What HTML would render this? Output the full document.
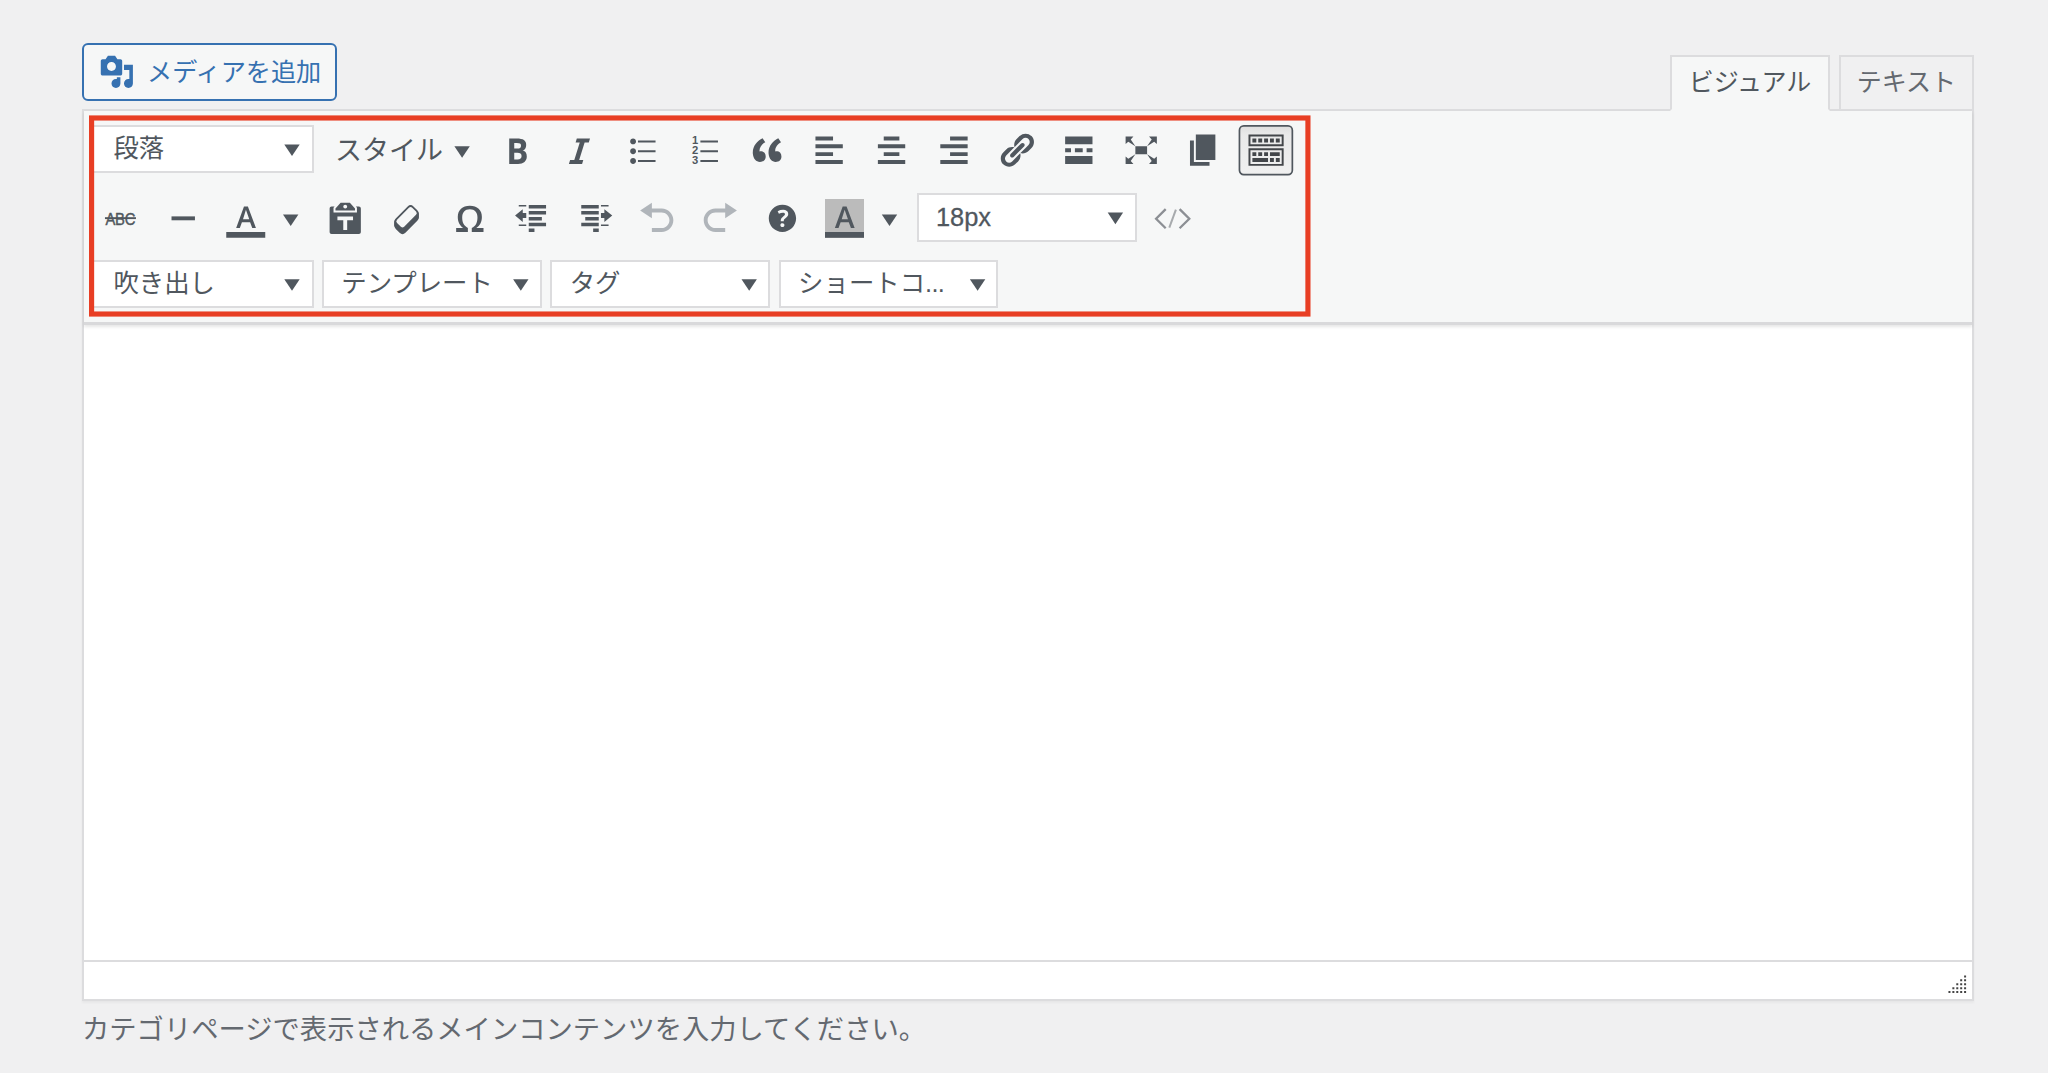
<!DOCTYPE html>
<html lang="ja">
<head>
<meta charset="utf-8">
<title>エディター</title>
<style>
*{box-sizing:border-box;margin:0;padding:0}
button{font:inherit;color:inherit;text-align:left;cursor:pointer;-webkit-appearance:none;appearance:none}
html,body{width:2048px;height:1073px;overflow:hidden}
body{background:#f0f0f1;font-family:"Liberation Sans","Noto Sans CJK JP",sans-serif;color:#3c434a;position:relative}
.abs{position:absolute}
/* add media button */
#addmedia{left:82px;top:43px;width:255.200px;height:58px;border:2px solid #3671b1;border-radius:6px;background:#f6f7f7;color:#3671b1;font-size:25.150px;line-height:54px;white-space:nowrap}
#addmedia svg{position:absolute;left:15px;top:9.200px;width:35.700px;height:35.700px;fill:#3671b1}
#addmedia span{position:absolute;left:63px;top:-.3px;font-weight:400}
/* tabs */
.tab{top:55px;height:56px;padding-bottom:1.400px;border:2px solid #dcdcde;font-size:25px;line-height:50px;text-align:center;color:#50575e;white-space:nowrap}
#tab-visual{left:1670px;width:160px;background:#f6f7f7;border-bottom-color:#f6f7f7;z-index:3}
#tab-text{left:1839px;width:135px;background:#f0f0f1;color:#646970;z-index:1}
/* editor container */
#wrap{left:82px;top:109px;width:1892px;height:892px;border:2px solid #dcdcde;background:#fff;z-index:2;box-shadow:0 2px 2px rgba(0,0,0,.04)}
#toolbar{left:84px;top:111px;width:1888px;height:214px;background:#f6f7f7;z-index:2;border-bottom:3px solid #d9d9db;box-shadow:0 2px 3px rgba(0,0,0,.1)}
#red{left:80px;top:105px;width:1240px;height:220px;z-index:6;overflow:visible}
#statusline{left:84px;top:960px;width:1888px;height:2px;background:#dcdcde;z-index:3}
#desc{left:82px;top:1009.400px;font-size:27.300px;line-height:42px;color:#646970;white-space:nowrap;z-index:3}
/* list boxes */
.lb{background:#fff;border:2px solid #dcdcde;height:49px;font-size:25.400px;line-height:45px;color:#50575e;white-space:nowrap;z-index:4;overflow:hidden}
.lb span{position:absolute;left:16px;top:-1px}
.lb b{font-weight:400;position:relative;top:1px;-webkit-text-stroke:.3px #50575e}
.lb i{font-style:normal;letter-spacing:-.7px}
#bgbox{left:825px;top:199px;width:39px;height:38.800px;background:#bbb;z-index:4}
#sinkbtn{left:1237px;top:123px;z-index:4}
#icons{left:0;top:0;z-index:5;pointer-events:none}
.txt{z-index:5;color:#50575e;white-space:nowrap}
</style>
</head>
<body>
<button type="button" class="abs" id="addmedia"><svg viewBox="0 0 20 20"><path d="M13 11V4c0-.55-.45-1-1-1h-1.67L9 1H5L3.67 3H2c-.55 0-1 .45-1 1v7c0 .55.45 1 1 1h10c.55 0 1-.45 1-1zM7 4.5c1.38 0 2.5 1.12 2.5 2.5S8.38 9.5 7 9.5 4.500 8.380 4.500 7 5.620 4.500 7 4.500zM14 6h5v10.500c0 1.380-1.120 2.500-2.500 2.500S14 17.880 14 16.500s1.120-2.500 2.500-2.500c.17 0 .34.02.5.05V9h-3V6zm-4 8.050V13h2v3.500c0 1.380-1.120 2.500-2.500 2.500S7 17.880 7 16.500 8.120 14 9.500 14c.17 0 .34.02.5.05z"/></svg><span>メディアを追加</span></button>

<button type="button" class="abs tab" id="tab-visual">ビジュアル</button>
<button type="button" class="abs tab" id="tab-text">テキスト</button>

<div class="abs" id="wrap"></div>
<div class="abs" id="toolbar"></div>
<svg class="abs" id="red" viewBox="0 0 1240 220"><rect x="11.580" y="12.980" width="1216.350" height="196.050" fill="none" stroke="#e83e24" stroke-width="5.150"/></svg>
<div class="abs" id="statusline"></div>

<!-- ROW1 -->
<div class="abs lb" style="left:92px;top:125.3px;width:222px;height:48px"><span style="left:19.4px">段落</span></div>
<div class="abs txt" style="left:335px;top:127px;font-size:27px;line-height:48px">スタイル</div>
<svg class="abs" id="sinkbtn" width="60" height="56"><defs><linearGradient id="sg" x1="0" y1="0" x2="0" y2="1"><stop offset="0" stop-color="#dedede"/><stop offset=".18" stop-color="#e9e9e9"/><stop offset="1" stop-color="#f0f0f0"/></linearGradient></defs><rect x="2.450" y="2.850" width="52.900" height="48.800" rx="4.300" fill="url(#sg)" stroke="#50575e" stroke-width="1.700"/></svg>
<!-- /ROW1 -->
<!-- ROW2 -->
<div class="abs" id="bgbox"></div>
<div class="abs lb" style="left:917px;top:193.4px;width:220px;height:48.2px"><span style="left:17px"><b>18px</b></span></div>
<!-- /ROW2 -->
<!-- ROW3 -->
<div class="abs lb" style="left:92px;top:260px;width:222px;height:48px"><span style="left:19.4px">吹き出し</span></div>
<div class="abs lb" style="left:322.0px;top:260px;width:219.6px;height:48px"><span style="left:17.3px">テンプレート</span></div>
<div class="abs lb" style="left:550.4px;top:260px;width:219.6px;height:48px"><span style="left:17.3px">タグ</span></div>
<div class="abs lb" style="left:778.8000000000001px;top:260px;width:219.6px;height:48px"><span style="left:17.3px">ショートコ<i>...</i></span></div>
<!-- /ROW3 -->
<!-- RESIZE -->
<svg class="abs" id="icons" width="2048" height="1073" fill="#50575e">
<path d="M284.30 144.50h15.400l-7.700 11.600z"/>
<path d="M454.40 146.20h15.400l-7.700 11.600z"/>
<g transform="translate(497.50 130.70) scale(1.953)"><path d="M6 4v13h4.54c1.37 0 2.46-.33 3.26-1 .8-.66 1.2-1.58 1.2-2.77 0-.84-.17-1.51-.51-2.01s-.9-.85-1.67-1.03v-.09c.57-.1 1.02-.4 1.36-.9s.51-1.13.51-1.91c0-1.14-.39-1.98-1.17-2.5C12.750 4.260 11.500 4 9.780 4H6zm2.570 5.150V6.260h1.360c.73 0 1.270.11 1.610.32.34.22.51.58.51 1.070 0 .54-.16.92-.47 1.150s-.82.35-1.510.35h-1.500zm0 2.190h1.600c1.440 0 2.160.53 2.160 1.610 0 .6-.17 1.050-.51 1.340s-.86.43-1.570.43H8.570v-3.380z"/></g>
<g transform="translate(559.92 130.70) scale(1.953)"><path d="M14.78 6h-2.13l-2.8 9h2.12l-.62 2H4.6l.62-2h2.14l2.8-9H8.03l.62-2h6.75z"/></g>
<g transform="translate(622.34 130.70) scale(1.953)"><path d="M5.5 7C4.67 7 4 6.33 4 5.5 4 4.68 4.67 4 5.5 4 6.32 4 7 4.68 7 5.5 7 6.33 6.32 7 5.5 7zM8 5h9v1H8V5zm-2.5 7c-.83 0-1.5-.67-1.5-1.5C4 9.68 4.67 9 5.5 9c.82 0 1.5.68 1.5 1.5 0 .83-.68 1.5-1.5 1.5zM8 10h9v1H8v-1zm-2.5 7c-.83 0-1.5-.67-1.5-1.5 0-.82.67-1.5 1.5-1.500.82 0 1.500.68 1.500 1.500 0 .83-.68 1.500-1.500 1.500zM8 15h9v1H8v-1z"/></g>
<g transform="translate(684.76 130.70) scale(1.953)"><path d="M8 5h9v1H8zM8 10h9v1H8zM8 15h9v1H8z"/><text x="3.65" y="6.95" font-family="Liberation Sans, sans-serif" font-weight="bold" font-size="5.75">1</text><text x="3.65" y="12" font-family="Liberation Sans, sans-serif" font-weight="bold" font-size="5.75">2</text><text x="3.65" y="17.05" font-family="Liberation Sans, sans-serif" font-weight="bold" font-size="5.75">3</text></g>
<g transform="translate(747.18 130.70) scale(1.953)"><path d="M9.49 13.22c0-.74-.2-1.38-.61-1.9-.62-.78-1.83-.88-2.53-.72-.29-1.65 1.11-3.75 2.92-4.65L7.88 3.9c-2.73 1.3-5.42 4.28-4.96 8.05C3.21 14.43 4.59 16 6.54 16c.85 0 1.56-.25 2.12-.75s.83-1.18.83-2.03zm8.05 0c0-.74-.2-1.38-.61-1.9-.63-.78-1.83-.88-2.53-.72-.29-1.65 1.11-3.75 2.92-4.65l-1.39-2.05c-2.73 1.3-5.42 4.28-4.95 8.05C11.27 14.43 12.65 16 14.6 16c.85 0 1.56-.25 2.11-.75s.83-1.18.83-2.03z"/></g>
<g transform="translate(809.60 130.70) scale(1.953)"><path d="M12 5V3H3v2h9zm5 4V7H3v2h14zm-5 4v-2H3v2h9zm5 4v-2H3v2h14z"/></g>
<g transform="translate(872.02 130.70) scale(1.953)"><path d="M14 5V3H6v2h8zm3 4V7H3v2h14zm-3 4v-2H6v2h8zm3 4v-2H3v2h14z"/></g>
<g transform="translate(934.44 130.70) scale(1.953)"><path d="M17 5V3H8v2h9zm0 4V7H3v2h14zm0 4v-2H8v2h9zm0 4v-2H3v2h14z"/></g>
<g transform="translate(996.86 130.70) scale(1.953)"><path d="M17.74 2.76c1.68 1.69 1.68 4.41 0 6.1l-1.53 1.52c-1.12 1.12-2.7 1.47-4.14 1.09l2.62-2.61.76-.77.76-.76c.84-.84.84-2.2 0-3.04-.84-.85-2.2-.85-3.04 0l-.77.76-3.38 3.38c-.37-1.44-.02-3.02 1.1-4.14l1.52-1.53c1.69-1.68 4.42-1.68 6.1 0zM8.59 13.43l5.34-5.34c.42-.42.42-1.1 0-1.52-.44-.43-1.13-.39-1.53 0l-5.33 5.34c-.42.42-.42 1.1 0 1.52.44.43 1.13.39 1.52 0zm-.76 2.29l4.14-4.15c.38 1.44.03 3.02-1.09 4.14l-1.52 1.53c-1.69 1.68-4.41 1.68-6.1 0-1.68-1.68-1.68-4.42 0-6.1l1.530-1.520c1.120-1.120 2.700-1.470 4.140-1.100l-4.140 4.150c-.85.84-.85 2.200 0 3.050.84.84 2.200.84 3.040 0z"/></g>
<g transform="translate(1059.28 130.70) scale(1.953)"><path d="M17 7V3H3v4h14zM6 11V9H3v2h3zm6 0V9H8v2h4zm5 0V9h-3v2h3zm0 6v-4H3v4h14z"/></g>
<g transform="translate(1121.70 130.70) scale(1.953)"><path d="M7 8h6v4H7zM2 3h4L4.630 4.500 7 8 3.370 5.700 2 6.800zM18 3h-4l1.370 1.500L13 8l3.630-2.300L18 6.800zM2 17h4l-1.370-1.500L7 12l-3.630 2.300L2 13.200zM18 17h-4l1.370-1.500L13 12l3.630 2.300 1.370-1.100z"/></g>
<g transform="translate(1184.12 130.70) scale(1.953)"><path d="M6 15V2h10v13H6zm-1 1h8v2H3V5h2v11z"/></g>
<g transform="translate(1246.54 130.70) scale(1.953)" fill="#43464a"><path d="M19 2v6H1V2h18zm-1 5V3H2v4h16zM5 4v2H3V4h2zm3 0v2H6V4h2zm3 0v2H9V4h2zm3 0v2h-2V4h2zm3 0v2h-2V4h2zm2 5v9H1V9h18zm-1 8v-7H2v7h16zM5 11v2H3v-2h2zm3 0v2H6v-2h2zm3 0v2H9v-2h2zm6 0v2h-5v-2h5zm-6 3v2H3v-2h8zm3 0v2h-2v-2h2zm3 0v2h-2v-2h2z"/></g>
<g transform="translate(101.10 198.80) scale(1.953)"><g transform="translate(0.03 -0.67) scale(1.024)"><text transform="translate(2.150 13.650) scale(0.86 1)" font-family="Liberation Sans, sans-serif" font-size="8.6" letter-spacing="-0.15" stroke="#50575e" stroke-width="0.22">ABC</text><path d="M1.900 9.850h15.500v.95H1.900z"/></g></g>
<g transform="translate(163.70 198.80) scale(1.953)"><path d="M4 9h12v2H4V9z"/></g>
<g transform="translate(226.40 198.80) scale(1.953)"><path d="M13.23 15h1.9L11 4H9L5 15h1.88l1.07-3h4.180zm-1.530-4.540H8.510L10 5.600z"/></g>
<path d="M226.250 232h39v5.800h-39z"/>
<path d="M283.00 214.50h15.400l-7.700 11.600z"/>
<g transform="translate(325.70 198.80) scale(1.953)"><path d="M12.38 2L15 5v1H5V5l2.640-3h4.740zM10 5c.55 0 1-.44 1-1 0-.55-.45-1-1-1s-1 .45-1 1c0 .56.45 1 1 1zm5.450-1H17c.55 0 1 .45 1 1v12c0 .56-.45 1-1 1H3c-.55 0-1-.44-1-1V5c0-.55.45-1 1-1h1.550L4 4.630V7h12V4.630zM14 11V9H6v2h3v5h2v-5h3z"/></g>
<g transform="translate(388.20 198.80) scale(1.953)"><g transform="translate(0.03 -0.67) scale(1.024)"><g transform="translate(9.140 9.880)" stroke="#50575e" stroke-width="0.9"><g transform="translate(0 2.35) rotate(-45)"><rect x="-5.800" y="-2.950" width="11.600" height="5.900" rx="1.600"/></g><g transform="translate(0 1.95) rotate(-45)"><rect x="-5.800" y="-2.950" width="11.600" height="5.900" rx="1.600"/></g><g transform="translate(0 1.55) rotate(-45)"><rect x="-5.800" y="-2.950" width="11.600" height="5.900" rx="1.600"/></g><g transform="translate(0 1.15) rotate(-45)"><rect x="-5.800" y="-2.950" width="11.600" height="5.900" rx="1.600"/></g><g transform="translate(0 0.75) rotate(-45)"><rect x="-5.800" y="-2.950" width="11.600" height="5.900" rx="1.600"/></g><g transform="translate(0 0.35) rotate(-45)"><rect x="-5.800" y="-2.950" width="11.600" height="5.900" rx="1.600"/></g><g transform="rotate(-45)"><rect x="-5.800" y="-2.950" width="11.600" height="5.900" rx="1.600" fill="#f6f7f7"/></g></g></g></g>
<g transform="translate(450.30 198.80) scale(1.953)"><path d="M10 5.4c1.27 0 2.24.36 2.91 1.08.66.71 1 1.76 1 3.13 0 1.28-.23 2.37-.69 3.27-.47.89-1.27 1.52-2.22 2.12v2h6v-2h-3.69c.92-.64 1.62-1.34 2.12-2.34.49-1.01.74-2.13.74-3.35 0-1.78-.55-3.19-1.650-4.220S11.920 3.540 10 3.540s-3.430.53-4.520 1.570c-1.100 1.040-1.650 2.440-1.650 4.200 0 1.210.24 2.310.73 3.330.48 1.010 1.190 1.710 2.100 2.360H3v2h6v-2c-.98-.64-1.800-1.280-2.240-2.170-.45-.89-.67-1.960-.67-3.220 0-1.370.33-2.410 1-3.130C7.750 5.760 8.720 5.400 10 5.400z"/></g>
<g transform="translate(513.20 198.80) scale(1.953)"><path transform="translate(0.03 -0.67) scale(1.024)" d="M7.750 3.750h8.650v1.800H7.750zM7.750 6.750h8.650v1.750H7.750zM7.750 9.700h6.550v1.750H7.750zM7.750 12.650h8.650v1.750H7.750zM7.750 15.500h2.850v1.700H7.750zM2.750 3.700h3.750v.85H2.750zM2.750 13.450h3.750v.85H2.750zM.9 9.050L4.750 5.900V7.800H6.500v2.500H4.750v1.900z"/></g>
<g transform="translate(575.70 198.80) scale(1.953)"><path transform="translate(0.03 -0.67) scale(1.024)" d="M2.750 3.750h8.750v1.800H2.750zM2.750 6.750h8.750v1.750H2.750zM4.750 9.700h6.750v1.750H4.750zM2.750 12.650h8.750v1.750H2.750zM8.700 15.500h2.800v1.700H8.700zM12.600 3.700h3.800v.85h-3.800zM12.600 13.450h3.800v.85h-3.800zM18.250 9.050L14.300 5.900V7.800H12.600v2.500h1.700v1.900z"/></g>
<g transform="translate(638.20 198.80) scale(1.953)" fill="#b0b5ba"><path d="M12 5H7V2L1 6l6 4V7h5c2.2 0 4 1.8 4 4s-1.8 4-4 4H7v2h5c3.3 0 6-2.7 6-6s-2.7-6-6-6z"/></g>
<g transform="translate(699.80 198.80) scale(1.953)" fill="#b0b5ba"><path d="M8 5h5V2l6 4-6 4V7H8c-2.2 0-4 1.8-4 4s1.8 4 4 4h5v2H8c-3.3 0-6-2.7-6-6s2.7-6 6-6z"/></g>
<g transform="translate(762.90 198.80) scale(1.953)"><path d="M17 10c0-3.870-3.140-7-7-7-3.870 0-7 3.130-7 7s3.130 7 7 7c3.860 0 7-3.130 7-7zm-6.300 1.480H9.140v-.43c0-.38.08-.7.24-.98s.46-.57.88-.89c.41-.29.68-.53.81-.71.14-.18.2-.39.2-.62 0-.25-.09-.44-.28-.58-.19-.13-.45-.19-.79-.19-.58 0-1.250.19-2 .57l-.64-1.280c.87-.49 1.800-.74 2.770-.74.81 0 1.450.2 1.920.58.48.39.71.91.71 1.550 0 .43-.09.8-.29 1.110-.19.32-.57.67-1.110 1.060-.38.28-.61.49-.71.63-.1.15-.15.34-.15.57v.35zm-1.470 2.740c-.18-.17-.27-.42-.27-.73 0-.33.08-.58.26-.75s.43-.25.77-.25c.32 0 .57.09.75.26s.27.42.27.74c0 .3-.09.55-.27.72-.18.18-.43.27-.75.27-.33 0-.58-.09-.76-.26z"/></g>
<g transform="translate(825.10 198.80) scale(1.953)"><path d="M13.23 15h1.9L11 4H9L5 15h1.88l1.07-3h4.180zm-1.530-4.540H8.510L10 5.600z"/></g>
<path d="M825 232h39v5.800h-39z"/>
<path d="M881.80 214.50h15.400l-7.700 11.600z"/>
<path d="M1107.70 212.60h15.400l-7.700 11.600z"/>
<g transform="translate(1152.500 197.500) scale(2)" fill="none"><path d="M6.600 5.800L1.800 10.600l4.800 4.800M13.550 5.800l4.850 4.800-4.850 4.800" stroke="#8c8f94" stroke-width="1.150"/><path d="M11.700 6.100L8.400 15.100" stroke="#a7aaad" stroke-width="1"/></g>
<path d="M284.30 279.20h15.400l-7.700 11.600z"/>
<path d="M513.10 279.20h15.400l-7.700 11.600z"/>
<path d="M741.50 279.20h15.400l-7.700 11.600z"/>
<path d="M969.90 279.20h15.400l-7.700 11.600z"/>
<path fill="#444" d="M1964.09 975.40h2v2h-2zM1960.18 979.31h2v2h-2zM1964.09 979.31h2v2h-2zM1956.27 983.22h2v2h-2zM1960.18 983.22h2v2h-2zM1964.09 983.22h2v2h-2zM1952.36 987.13h2v2h-2zM1956.27 987.13h2v2h-2zM1960.18 987.13h2v2h-2zM1964.09 987.13h2v2h-2zM1948.45 991.04h2v2h-2zM1952.36 991.04h2v2h-2zM1956.27 991.04h2v2h-2zM1960.18 991.04h2v2h-2zM1964.09 991.04h2v2h-2z"/>
</svg>
<!-- /RESIZE -->

<div class="abs" id="desc">カテゴリページで表示されるメインコンテンツを入力してください。</div>
</body>
</html>
